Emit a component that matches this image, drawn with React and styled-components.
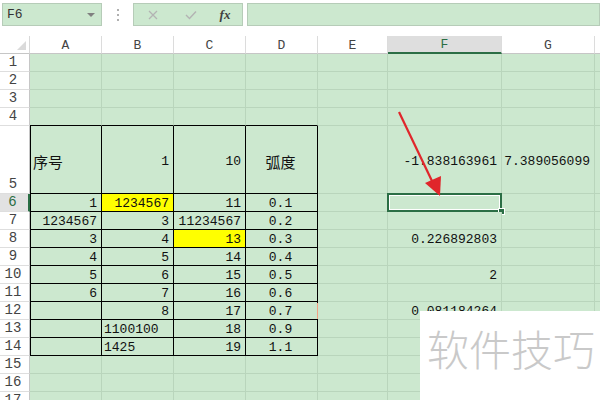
import React from "react";
import styled, { createGlobalStyle } from "styled-components";

const GlobalStyle = createGlobalStyle`
  html, body { margin: 0; padding: 0; background: #fff; }
  body { width: 600px; height: 400px; overflow: hidden; }
`;

const GREEN = "#cce8cf";
const GRID = "#b9d5bc";
const ACCENT = "#2b6e45";
const MONO = `"Liberation Mono", "DejaVu Sans Mono", monospace`;
const CJK = `"Noto Sans CJK SC", "Noto Sans", sans-serif`;

const Page = styled.div`
  position: relative;
  width: 600px;
  height: 400px;
  overflow: hidden;
  background: #fff;
`;

const TopBar = styled.div`
  height: 36px;
  display: flex;
  align-items: flex-start;
  padding: 3px 0 0 2px;
  box-sizing: border-box;
`;

const Box = styled.div`
  height: 23px;
  box-sizing: border-box;
  background: ${GREEN};
  border: 1px solid #b6ccb8;
  display: flex;
  align-items: center;
  position: relative;
  width: ${(p) => (p.$w ? `${p.$w}px` : "auto")};
  flex: ${(p) => (p.$grow ? 1 : "none")};
  margin-left: ${(p) => p.$ml || 0}px;
`;

const NameText = styled.span`
  font-family: ${MONO};
  font-size: 13px;
  color: #333;
  padding-left: 4px;
  flex: 1;
`;

const Caret = styled.span`
  width: 0;
  height: 0;
  border-left: 4px solid transparent;
  border-right: 4px solid transparent;
  border-top: 4px solid #808080;
  margin-right: 6px;
`;

const Dots = styled.div`
  width: 31px;
  height: 23px;
  display: flex;
  flex-direction: column;
  align-items: center;
  justify-content: center;
  gap: 3px;
  & > i {
    display: block;
    width: 2px;
    height: 2px;
    background: #b0b0b0;
  }
`;

const IconSlot = styled.span`
  width: ${(p) => p.$w}px;
  display: flex;
  justify-content: center;
  align-items: center;
`;

const Fx = styled.span`
  font-family: "Liberation Serif", "DejaVu Serif", serif;
  font-style: italic;
  font-weight: bold;
  font-size: 13px;
  color: #404040;
`;

const Sheet = styled.div`
  display: grid;
  grid-template-columns: 30px 72px 72px 72px 72px 70px 114px 93px 1fr;
  grid-template-rows: 18px repeat(4, 18px) 68px repeat(12, 18px);
`;

const Corner = styled.div`
  background: #fff;
  border-right: 1px solid #d8d8d8;
  border-bottom: 1px solid #c6c6c6;
  position: relative;
  &::after {
    content: "";
    position: absolute;
    right: 3px;
    bottom: 3px;
    width: 0;
    height: 0;
    border-left: 9px solid transparent;
    border-bottom: 9px solid #dadada;
  }
`;

const ColHead = styled.div`
  box-sizing: border-box;
  background: ${(p) => (p.$sel ? "#dedede" : "#fff")};
  border-right: 1px solid #dcdcdc;
  border-bottom: ${(p) => (p.$sel ? `2px solid ${ACCENT}` : "1px solid #c6c6c6")};
  font-family: ${MONO};
  font-size: 13px;
  color: ${(p) => (p.$sel ? ACCENT : "#444")};
  display: flex;
  align-items: center;
  justify-content: center;
  padding-top: 1px;
`;

const RowHead = styled.div`
  box-sizing: border-box;
  background: ${(p) => (p.$sel ? "#e2e2e2" : "#fff")};
  border-right: ${(p) => (p.$sel ? `2px solid ${ACCENT}` : "1px solid #c6c6c6")};
  border-bottom: 1px solid #dedede;
  font-family: ${MONO};
  font-size: 14px;
  color: ${(p) => (p.$sel ? ACCENT : "#444")};
  display: flex;
  align-items: flex-end;
  justify-content: center;
  padding: 0 3px 0 0;
  line-height: 17px;
`;

const Cell = styled.div`
  box-sizing: border-box;
  position: relative;
  background: ${(p) => p.$bg || GREEN};
  border-right: 1px solid ${(p) => (p.$br ? "#000" : GRID)};
  border-bottom: 1px solid ${(p) => (p.$bb ? "#000" : GRID)};
  box-shadow: ${(p) => (p.$bl ? "inset 1px 0 0 #000" : "none")};
  display: flex;
  align-items: center;
  justify-content: ${(p) =>
    p.$align === "left" ? "flex-start" : p.$align === "center" ? "center" : "flex-end"};
  padding: ${(p) => (p.$tall ? 4 : 1)}px 4px 0 ${(p) => (p.$bl ? 3 : 2)}px;
  font-family: ${(p) => (p.$cjk ? CJK : MONO)};
  font-size: ${(p) => (p.$cjk ? 15 : 13)}px;
  color: #111;
  white-space: nowrap;
  overflow: visible;
  z-index: ${(p) => (p.$spill ? 1 : 0)};
`;

const Selection = styled.div`
  position: absolute;
  left: -1px;
  top: -1px;
  right: -1px;
  bottom: -1px;
  border: 2px solid ${ACCENT};
  box-shadow: inset 0 0 0 1px #fff;
  z-index: 2;
  &::after {
    content: "";
    position: absolute;
    right: -5px;
    bottom: -5px;
    width: 5px;
    height: 5px;
    background: ${ACCENT};
    border: 1px solid #fff;
  }
`;

const CommentMark = styled.span`
  position: absolute;
  right: -2px;
  top: 1px;
  bottom: 0;
  width: 2px;
  background: #f2a184;
  z-index: 3;
`;

const Watermark = styled.div`
  position: absolute;
  left: 420px;
  top: 311px;
  width: 180px;
  height: 89px;
  background: #fff;
  z-index: 5;
  font-family: ${CJK};
  font-size: 42px;
  font-weight: 300;
  color: #c9c9c9;
  padding: 16px 0 0 7px;
  box-sizing: border-box;
  line-height: 1;
  white-space: nowrap;
`;

const Overlay = styled.svg`
  position: absolute;
  left: 0;
  top: 0;
  z-index: 4;
  pointer-events: none;
`;

const C = (v, align = "right", extra = {}) => ({ v, align, ...extra });
const Y = "#ffff00";

const data = {
  5: { 0: C("序号", "left", { cjk: true }), 1: C("1"), 2: C("10"), 3: C("弧度", "center", { cjk: true }), 5: C("-1.838163961"), 6: C("7.389056099") },
  6: { 0: C("1"), 1: C("1234567", "right", { bg: Y }), 2: C("11"), 3: C("0.1", "center") },
  7: { 0: C("1234567"), 1: C("3"), 2: C("11234567"), 3: C("0.2", "center") },
  8: { 0: C("3"), 1: C("4"), 2: C("13", "right", { bg: Y }), 3: C("0.3", "center"), 5: C("0.226892803") },
  9: { 0: C("4"), 1: C("5"), 2: C("14"), 3: C("0.4", "center") },
  10: { 0: C("5"), 1: C("6"), 2: C("15"), 3: C("0.5", "center"), 5: C("2") },
  11: { 0: C("6"), 1: C("7"), 2: C("16"), 3: C("0.6", "center") },
  12: { 1: C("8"), 2: C("17"), 3: C("0.7", "center", { mark: true }), 5: C("0.081184264") },
  13: { 1: C("1100100", "left"), 2: C("18"), 3: C("0.9", "center") },
  14: { 1: C("1425", "left"), 2: C("19"), 3: C("1.1", "center") },
};

const cols = ["A", "B", "C", "D", "E", "F", "G", ""];

function XIcon() {
  return (
    <svg width="10" height="10" viewBox="0 0 10 10">
      <path d="M1 1 L9 9 M9 1 L1 9" stroke="#b3b3b3" strokeWidth="1.3" fill="none" />
    </svg>
  );
}

function CheckIcon() {
  return (
    <svg width="12" height="10" viewBox="0 0 12 10">
      <path d="M1 5 L4.5 8.5 L11 1.5" stroke="#b3b3b3" strokeWidth="1.4" fill="none" />
    </svg>
  );
}

export default function App() {
  const rows = [];
  for (let r = 1; r <= 17; r++) {
    rows.push(
      <RowHead key={`rh${r}`} $sel={r === 6}>
        {r}
      </RowHead>
    );
    for (let c = 0; c < 8; c++) {
      const spec = (data[r] && data[r][c]) || null;
      const inTable = r >= 5 && r <= 14 && c <= 3;
      const topEdge = r === 4 && c <= 3;
      rows.push(
        <Cell
          key={`c${r}-${c}`}
          $align={spec ? spec.align : "right"}
          $bg={spec && spec.bg}
          $cjk={spec && spec.cjk}
          $br={inTable}
          $bb={inTable || topEdge}
          $bl={inTable && c === 0}
          $spill={c === 5}
          $tall={r === 5}
        >
          {spec ? spec.v : null}
          {r === 6 && c === 5 ? <Selection /> : null}
          {spec && spec.mark ? <CommentMark /> : null}
        </Cell>
      );
    }
  }

  return (
    <Page>
      <GlobalStyle />
      <TopBar>
        <Box $w={100}>
          <NameText>F6</NameText>
          <Caret />
        </Box>
        <Dots>
          <i />
          <i />
          <i />
        </Dots>
        <Box $w={110}>
          <IconSlot $w={38}>
            <XIcon />
          </IconSlot>
          <IconSlot $w={38}>
            <CheckIcon />
          </IconSlot>
          <IconSlot $w={30}>
            <Fx>fx</Fx>
          </IconSlot>
        </Box>
        <Box $grow $ml={4} />
      </TopBar>
      <Sheet>
        <Corner />
        {cols.map((l, i) => (
          <ColHead key={`h${i}`} $sel={l === "F"}>
            {l}
          </ColHead>
        ))}
        {rows}
      </Sheet>
      <Overlay width="600" height="400" viewBox="0 0 600 400">
        <line x1="399" y1="112" x2="432" y2="181" stroke="#e0262b" strokeWidth="2.2" />
        <polygon points="440,196 425,183 441,176" fill="#e0262b" />
      </Overlay>
      <Watermark>软件技巧</Watermark>
    </Page>
  );
}
